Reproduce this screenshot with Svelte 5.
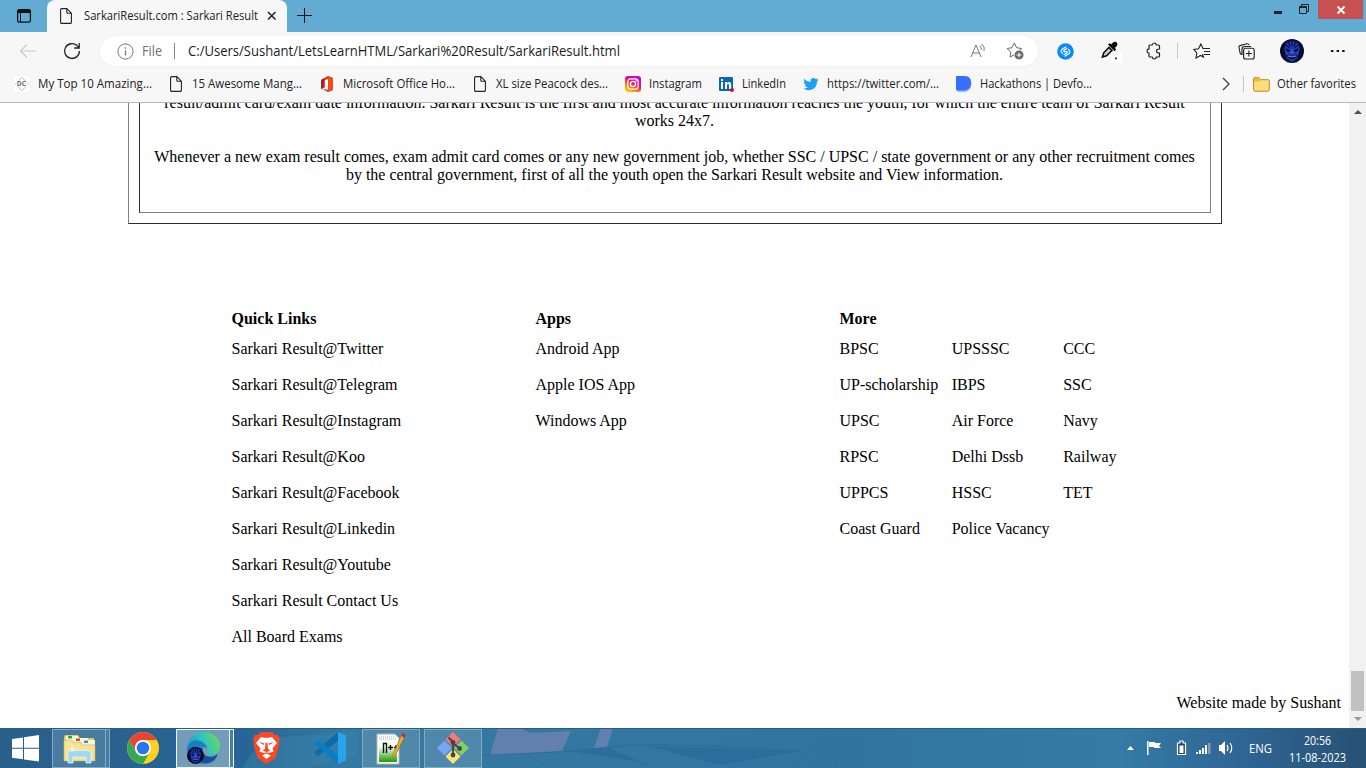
<script>
  const bookmarks = [
    { icon: 'dc', label: 'My Top 10 Amazing...', w: 154, t: 114 },
    { icon: 'page', label: '15 Awesome Mang...', w: 151, t: 110 },
    { icon: 'office', label: 'Microsoft Office Ho...', w: 153, t: 112 },
    { icon: 'page', label: 'XL size Peacock des...', w: 153, t: 112 },
    { icon: 'insta', label: 'Instagram', w: 93, t: 53 },
    { icon: 'linkedin', label: 'LinkedIn', w: 85, t: 44 },
    { icon: 'twitter', label: 'https://twitter.com/...', w: 153, t: 112 },
    { icon: 'devfolio', label: 'Hackathons | Devfo...', w: 153, t: 112 }
  ];
  const quick = ['Sarkari Result@Twitter', 'Sarkari Result@Telegram', 'Sarkari Result@Instagram', 'Sarkari Result@Koo', 'Sarkari Result@Facebook', 'Sarkari Result@Linkedin', 'Sarkari Result@Youtube', 'Sarkari Result Contact Us', 'All Board Exams'];
  const apps = ['Android App', 'Apple IOS App', 'Windows App'];
  const more = ['BPSC', 'UPSSSC', 'CCC', 'UP-scholarship', 'IBPS', 'SSC', 'UPSC', 'Air Force', 'Navy', 'RPSC', 'Delhi Dssb', 'Railway', 'UPPCS', 'HSSC', 'TET', 'Coast Guard', 'Police Vacancy'];
</script>

{#snippet label(text, width, size, color)}
  <svg class="label" {width} height="20"><text x="0" y="14" font-size={size} fill={color} textLength={width} lengthAdjust="spacingAndGlyphs">{text}</text></svg>
{/snippet}

{#snippet page()}
  <svg width="16" height="16" viewBox="0 0 16 16" fill="none" stroke="#222" stroke-width="1.1"><path d="M3.6.6h5.2l4.6 4.6v9.2q0 1-1 1H3.6q-1 0-1-1V1.6q0-1 1-1zM8.8.6v3.6q0 1 1 1h3.6" /></svg>
{/snippet}

{#snippet avatar(size)}
  <svg width={size} height={size} viewBox="0 0 24 24">
    <circle cx="12" cy="12" r="12" fill="#080b2b" />
    <path d="M6 4q6-4 12 0l2 6-3 10-5 3-5-3-3-10z" fill="#1b35a6" />
    <path d="M8 1l2 7M16 1l-2 7M12 1v6M5 5l4 4M19 5l-4 4" stroke="#080b37" stroke-width="1" />
    <path d="M5 9.5l6 2-3 1.2zM19 9.5l-6 2 3 1.2z" fill="#03051c" />
    <path d="M12 10l-2 4h4zM6 14l2 1M18 14l-2 1" stroke="#3c63dc" stroke-width=".8" fill="#2f51c8" />
    <path d="M7 16q5 2 10 0-1 4-5 4t-5-4z" fill="#060720" />
    <path d="M8 17q4 2 8 0" stroke="#8aa2f0" stroke-width=".9" fill="none" />
  </svg>
{/snippet}

<div class="screen">
  <header class="tabs">
    <div class="tabmenu">
      <svg width="16" height="16" viewBox="0 0 16 16"><rect x="1.6" y="1.6" width="12.8" height="12.6" rx="1.8" fill="none" stroke="#111" stroke-width="1.3" /><path d="M2 2h12v2.5H2z" fill="#111" stroke="#111" /><path d="M4.5 5v9" stroke="#111" /></svg>
    </div>
    <div class="tab">
      {@render page()}
      <div class="title">{@render label('SarkariResult.com : Sarkari Result', 174, 12.3, '#222')}</div>
      <svg class="close" width="10" height="10" viewBox="0 0 10 10"><path d="M1 1l7.5 7.5M8.5 1L1 8.5" stroke="#222" stroke-width="1.5" /></svg>
    </div>
    <svg class="plus" width="15" height="15" viewBox="0 0 15 15"><path d="M7.5 0v15M0 7.5h15" stroke="#111" stroke-width="1" /></svg>
    <div class="winctl">
      <svg width="10" height="16"><path d="M1 12.5h8" stroke="#222" stroke-width="3" /></svg>
      <svg width="12" height="16"><path d="M1.5 6.5h7v7h-7zM1 7.5h8M3.5 6V4.5h7v7H9" fill="none" stroke="#222" /></svg>
      <div class="x"><svg width="10" height="10"><path d="M1.5 1.5l7 7M8.5 1.5l-7 7" stroke="white" stroke-width="1.8" /></svg></div>
    </div>
  </header>

  <div class="toolbar">
    <div class="nav"><svg width="18" height="16" viewBox="0 0 18 16" fill="none" stroke="#c9c9c9" stroke-width="1.1"><path d="M17 8H1.5M8 1.5L1.5 8 8 14.5" /></svg></div>
    <div class="nav"><svg width="18" height="18" viewBox="0 0 18 18" fill="none" stroke="#222" stroke-width="1.3"><path d="M16.4 9A7.4 7.4 0 1 1 14 3.6L16 5.6M16.2 1v5h-5" /></svg></div>
    <div class="address">
      <svg width="17" height="17" viewBox="0 0 17 17" fill="none" stroke="#767676"><circle cx="8.5" cy="8.5" r="7.6" /><path d="M8.5 7.4v5M8.5 4.2v1.5" stroke-width="1.3" /></svg>
      <div class="file">{@render label('File', 20, 13.8, '#717171')}</div>
      <i></i>
      <div class="url">{@render label('C:/Users/Sushant/LetsLearnHTML/Sarkari%20Result/SarkariResult.html', 432, 14, '#1c1c1c')}</div>
      <svg class="read" width="17" height="16" viewBox="0 0 17 16" fill="none" stroke="#777"><path d="M1 14L6 2l5 12M2.7 10h6.6M10 3q2 2 1.2 4M11.5 1q4 3 2.5 7" /></svg>
      <svg class="fav" width="18" height="18" viewBox="0 0 18 18" fill="none" stroke="#696969"><path d="M8 13l-4 2 .8-5L1 6.5l5-.8L8.3 1l2.3 4.7 5 .8-2 2" /><circle cx="13" cy="13" r="4.5" fill="#696969" stroke="none" /><path d="M13 10.5v5M10.5 13h5" stroke="white" /></svg>
    </div>
    <div class="tools">
      <span style:width="54px"><svg width="17" height="17" viewBox="0 0 17 17"><circle cx="8.5" cy="8.5" r="8.3" fill="#0989ff" /><path d="M5.6 10.6C3.4 9 4 7 5.6 6L8.8 4M11.4 6.4c2.2 1.6 1.600 3.600 0 4.600L8.200 13M9.800 5.600L7.200 7.200q-1 .8 0 1.400l2.600 0q1 .6 0 1.400l-2.600 1.600" stroke="white" stroke-width="1.2" fill="none" stroke-linecap="round" /></svg></span>
      <span style:width="38px"><svg width="22" height="23" viewBox="0 0 22 23"><path d="M2.5 17l1.2-4.2L9 7.5l3 3-5.5 5.3z" fill="#ccc" stroke="#111" stroke-width="1.6" /><path d="M8 4.5l1.5-1.3 2 1L13 2.5Q15.2.8 16.7 2.5t0 3.8l-1.7 1.5 1 2-1.4 1.5z" fill="#111" /><path d="M11 12h11v11H11z" fill="white" /><path d="M15 17.5h1.8v1.8H15z" fill="#222" /></svg></span>
      <span style:width="47px"><svg width="16" height="18" viewBox="0 0 16 18" fill="none" stroke="#222" stroke-width="1.2"><path d="M4 3h2.2Q6.5 1 8.2 1t2.2 2h2.1q1 0 1 1v3q-3-.1-3 2t3 2v3q0 1-1 1h-2.1q-.5 2-2.2 2t-2-2H4q-1 0-1-1v-2.8Q1 11 1 9t2-2.2V4q0-1 1-1z" /></svg></span>
      <i class="sep"></i>
      <span style:width="48px"><svg width="18" height="17" viewBox="0 0 18 17" fill="none" stroke="#222" stroke-width="1.1"><path d="M9.5 11l1 3-3-1.6L3 15l.8-5L1 6.5l4.5-.8L7.8 1 10 5.5h7M11 8.5h6M11 11.5h6" /></svg></span>
      <span style:width="40px"><svg width="17" height="17" viewBox="0 0 17 17" fill="none" stroke="#222" stroke-width="1.15"><rect x="5.6" y="5.2" width="10.6" height="10.8" rx="2" /><path d="M10.9 7.5v6M7.9 10.5h6M3.5 11.5l-1.3-1L1 4.5Q.7 3 2 2.6L9 .8q1.5-.2 2 1.2M4 12V6q0-2.5 3-2.5h6" /></svg></span>
      <span style:width="52px">{@render avatar(24)}</span>
      <span style:width="40px"><svg width="16" height="4"><path d="M1 1h2.4v2H1zM6.6 1H9v2H6.6zM12.2 1h2.4v2h-2.4z" fill="#111" /></svg></span>
    </div>
  </div>

  <div class="bookmarks">
    {#each bookmarks as b}
      <div class="bm" style:width="{b.w}px">
        {#if b.icon === 'page'}
          {@render page()}
        {:else}
          <svg width="16" height="16" viewBox="0 0 16 16">
            {#if b.icon === 'dc'}
              <path d="M0 0h16v16H0z" fill="white" /><path d="M8 1.5L14.5 8 8 14.5 1.5 8z" fill="none" stroke="#bbb" /><path d="M2 5.5h12v5H2z" fill="#f3f3f3" /><text x="2.8" y="10.2" font-size="6.6" font-weight="bold" fill="#777">DC</text>
            {:else if b.icon === 'office'}
              <path d="M2 4l7-4 5 2v12l-5 2-6-3 6 .7V3L5.5 4.2v7L2 13z" fill="#dc3518" /><path d="M9 0l5 2v12l-5 2z" fill="#f14b18" /><path d="M2 4l3.5-2v9.2L2 13z" fill="#a91e2e" />
            {:else if b.icon === 'insta'}
              <defs><linearGradient id="ig" x1=".2" y1="1" x2=".8" y2="0"><stop stop-color="#ffd000" /><stop offset=".3" stop-color="#ff7b10" /><stop offset=".58" stop-color="#f7057d" /><stop offset="1" stop-color="#a014ed" /></linearGradient></defs><rect width="16" height="16" rx="3" fill="url(#ig)" /><rect x="2.8" y="2.8" width="10.4" height="10.4" rx="3" fill="none" stroke="white" stroke-width="1.2" /><circle cx="8" cy="8" r="2.6" fill="none" stroke="white" stroke-width="1.3" /><circle cx="11.2" cy="4.8" r=".7" fill="white" />
            {:else if b.icon === 'linkedin'}
              <rect x="1" y="1" width="14" height="14" rx="1" fill="#0a66c2" /><path d="M3 6h2v7H3zM3 3h2v2H3zM7 6h2v1q2-2 4 0l.3 6H11V9q-1-2-2 0v4H7z" fill="white" /><circle cx="14" cy="14" r="2" fill="#d11124" />
            {:else if b.icon === 'twitter'}
              <path d="M1 2.7q3 3.4 6.5 3.3Q7 2 10.5 2q1.4 0 2.3 1l2.2-.8-1.3 1.8 2-.5-1.6 1.8Q14 12 8.5 13.8 4 15 .4 12.6q2.7.1 4.3-1.4-2.3-.2-3-2.2l1.4-.1Q.8 8 .8 5.7l1.3.4Q0 4.5 1 2.7z" fill="#1da1f2" />
            {:else}
              <path d="M1 0h8q6.5 0 6.5 7.5T9 16H3q-2 0-2-2z" fill="#9abaff" /><path d="M0 0h8.5Q15 0 15 7t-6.5 7.5H1.5Q0 14.5 0 13z" fill="#3770ff" />
            {/if}
          </svg>
        {/if}
        {@render label(b.label, b.t, 12.3, '#222')}
      </div>
    {/each}
    <svg class="chev" width="9" height="14" viewBox="0 0 9 14"><path d="M1 1l6 6-6 6" fill="none" stroke="#444" stroke-width="1.4" /></svg>
    <i class="sep"></i>
    <svg class="folder" width="17" height="15" viewBox="0 0 17 15"><path d="M.6 2Q.6.7 2 .7h4l2 2h7q1.3 0 1.3 1.3v8.7q0 1.5-1.5 1.5H2Q.6 14.2.6 12.7z" fill="#ffdc7d" stroke="#b98a16" /><path d="M1 4.5h5l2-1.8L6 1H2L1 2z" fill="#edb931" /></svg>
    {@render label('Other favorites', 79, 12.3, '#222')}
  </div>

  <main>
    <div class="content">
      <div class="outer">
        <div class="inner">
          <p>result/admit card/exam date information. Sarkari Result is the first and most accurate information reaches the youth, for which the entire team of Sarkari Result<br />works 24x7.</p>
          <p>Whenever a new exam result comes, exam admit card comes or any new government job, whether SSC / UPSC / state government or any other recruitment comes<br />by the central government, first of all the youth open the Sarkari Result website and View information.</p>
        </div>
      </div>
      <footer>
        <section><h4>Quick Links</h4><div class="list">{#each quick as q}<span>{q}</span>{/each}</div></section>
        <section><h4>Apps</h4><div class="list">{#each apps as a}<span>{a}</span>{/each}</div></section>
        <section><h4>More</h4><div class="list triple">{#each more as m}<span>{m}</span>{/each}</div></section>
      </footer>
      <div class="credit">Website made by Sushant</div>
    </div>
    <div class="scroll">
      <svg width="17" height="17"><path d="M5 11l4-4 4 4z" fill="#505050" /></svg>
      <div class="thumb"></div>
      <svg width="17" height="17"><path d="M5 6l4 4 4-4z" fill="#999" /></svg>
    </div>
  </main>

  <div class="taskbar">
    <svg class="wall" width="1366" height="40" viewBox="0 0 1366 40">
      <defs><linearGradient id="tb"><stop stop-color="#2a5f8b" /><stop offset=".18" stop-color="#276596" /><stop offset=".25" stop-color="#3579a3" /><stop offset=".4" stop-color="#3478a2" /><stop offset=".62" stop-color="#3174a0" /><stop offset=".82" stop-color="#347ba6" /><stop offset=".9" stop-color="#306797" /><stop offset="1" stop-color="#275174" /></linearGradient></defs>
      <path d="M0 0h1366v40H0z" fill="url(#tb)" />
      <path d="M242 40l20-29 95-8v24l-48 13z" fill="#3987ad" opacity=".4" />
      <path d="M498 0h21l12 5 40-2-9 20-72 4zM601 0h12l-6 19-13 1z" fill="#6280ae" />
      <path d="M480 27q90-2 128-8t192 4" fill="none" stroke="#286790" opacity=".6" /><path d="M570 23l38-3 32 14zM647 18l151 5-76 14z" fill="#276b9c" opacity=".7" />
      <path d="M528 27l20 13M608 20l45 20M792 40q26-28 44-40M835 40l5-13" fill="none" stroke="#286c97" opacity=".6" />
      <path d="M0 .5h1366" stroke="#285c80" />
    </svg>
    <div class="apps">
      <div class="slot start"><svg width="27" height="27" viewBox="0 0 27 27" fill="white"><path d="M0 4l11-1.6v10.4H0zM12 2.2L27 0v12.8H12zM0 13.8h11v10.4L0 22.7zM12 13.8h15v12.7L12 24.4z" /></svg></div>
      <div class="box group"><svg width="33" height="32" viewBox="0 0 33 32"><path d="M1 28V5q0-2 2-2h12l2 3h14v22z" fill="#e5c66e" /><path d="M3 4h12v6H3z" fill="#fffbe6" /><path d="M5 4h4v2.500H5z" fill="#19b52b" /><path d="M10 6h15v5H10z" fill="#fff6d2" /><path d="M13 6.500h4V9h-4z" fill="#dc4a2a" /><path d="M18 8h14v5H18z" fill="#fff6d2" /><path d="M21 8.500h4V11h-4z" fill="#2498e0" /><path d="M1 8h8l1.500 2.500H18l2 2.500h12v16H1z" fill="#f8e194" stroke="#cdae60" stroke-width=".6" /><path d="M5 31V21q0-2.500 3-2.500h17q3 0 3 2.500v10h-5v-6H10v6z" fill="#9ed8ee" stroke="#e1f7ff" stroke-width=".8" /><path d="M9 13v7M5.500 16.500h7" stroke="#fff" stroke-width=".8" /></svg></div>
      <div class="stack"></div>
      <div class="slot chrome"><svg width="32" height="32" viewBox="0 0 32 32"><circle cx="16" cy="16" r="16" fill="#ffcf23" /><path d="M2.2 8A16 16 0 0 1 29.8 8H16a8 8 0 0 0-7 12z" fill="#e84435" /><path d="M2.2 8A16 16 0 0 0 16 32l7-12a8 8 0 0 1-14 0z" fill="#35a853" /><circle cx="16" cy="16" r="8" fill="white" /><circle cx="16" cy="16" r="6.3" fill="#2976ed" /></svg></div>
      <div class="box group active"><div class="edge"><svg width="33" height="32" viewBox="0 0 33 32">
        <defs><linearGradient id="eg" x1="0" y1=".6" x2="1" y2=".3"><stop stop-color="#149bd7" /><stop offset=".5" stop-color="#2fc3c6" /><stop offset="1" stop-color="#6bdc50" /></linearGradient></defs>
        <path d="M0 16C2 5 9 0 17 0c9 0 16 7 16 14 0 6-4 9-8 9-5 0-6-2-5-4 2-3 0-8-6-10C8 8 3 11 0 16z" fill="url(#eg)" />
        <path d="M0 16C3 9 8 7 13 9c5 2 7 5 7 8-2-3-8-2-8 4 0 7 7 10 14 7 2-1 3-1 2 0-4 4-11 5-17 3C4 29 0 23 0 16z" fill="#1682bd" />
        <path d="M13 16c-4 4-3 10 2 14 5 3 13-1 15-6 1-2 0-2-1-1-4 3-10 2-12-1-2-2-2-4-1-6z" fill="#174f98" />
      </svg><div class="mini">{@render avatar(17)}</div></div></div>
      <div class="stack lit"></div>
      <div class="slot brave"><svg width="27" height="32" viewBox="0 0 27 32"><path d="M8 0h11l3 3h3l2 4-1 3 .5 2-4 14-9 6-9-6L.5 12 1 10 0 7l2-4h3z" fill="#fb4722" /><path d="M8 5l3.500.7h4L19 5l5 6-4.500 5.500 1 3-5 1.800-2-1.300-2 1.300-5-1.800 1-3L3 11zM9 23.500l4.500-2 4.500 2-4.500 3.500z" fill="white" /><path d="M6 10l5.500 1.500-1 1.500zM21 10l-5.500 1.500 1 1.500zM12.500 11h2l.5 6 2.500 1.200-4 2-4-2L12 17z" fill="#fb4722" /></svg></div>
      <div class="slot vs"><svg width="32" height="32" viewBox="0 0 32 32"><path d="M24 0v9L4 24l-4-3.500z" fill="#0a6eae" /><path d="M0 11.500L4 8l20 15v9z" fill="#087fc2" /><path d="M24 0l8 3.500v25L24 32z" fill="#26a5ed" /></svg></div>
      <div class="box npp"><svg width="30" height="33" viewBox="0 0 30 33"><defs><linearGradient id="np" x1="0" y1="0" x2="0" y2="1"><stop offset=".3" stop-color="#f7fff0" /><stop offset="1" stop-color="#1b9b05" /></linearGradient></defs><path d="M1 2h18l4 4v26H1z" fill="#fff" stroke="#b8b8a8" /><path d="M3 8h18v22H3z" fill="url(#np)" /><path d="M2 2h17M3 5h16M3 7h18" stroke="#9ab3bb" stroke-dasharray="1 1" /><path d="M7.500 21v-9.500h3V21M12 15.500h5M14.500 13v5M18 15.500h4M20 13v5" fill="none" stroke="#111" stroke-width="1.4" /><path d="M26 2l3 2-10 20-3 3 1-5z" fill="#e9ae27" stroke="#99712a" stroke-width=".7" /><path d="M26.500 1l3 2-1 3-3-2z" fill="#a62f4d" /></svg></div>
      <div class="box git"><svg width="32" height="32" viewBox="0 0 32 32"><path d="M16 0l7.500 7.500L16 15 8.500 7.500z" fill="#f97978" /><path d="M24.500 8.500L32 16l-7.500 7.500L17 16z" fill="#84cf5d" /><path d="M16 17l7.500 7.500L16 32l-7.500-7.500z" fill="#ffe277" /><path d="M7.500 8.500L15 16l-7.500 7.500L0 16z" fill="#75a7f4" /><path d="M11.500 5.500L16 10v13M16 11l6 5" fill="none" stroke="#444346" stroke-width="1.900" /><circle cx="16" cy="10.500" r="2.400" fill="#444346" /><circle cx="16" cy="23" r="2.400" fill="#444346" /><circle cx="22.500" cy="16.500" r="2.400" fill="#444346" /></svg></div>
    </div>
    <div class="tray">
      <svg width="110" height="20" viewBox="0 0 110 20" fill="white"><path d="M1 12l3.500-4 3.500 4z" /><path d="M21 3h1.500v14H21zM23 4h6v1h6l-2 3 2 2h-7V9h-5z" /><path d="M54 3h3v2h2.500v11.500h-8V5H54z" fill="#254862" stroke="white" stroke-width="1.200" /><path d="M53.500 7.500h4V15h-4zM70 14h2v2h-2zM73 12h2v4h-2zM76 10h2v6h-2zM79 7h2v9h-2z" /><path d="M82 5h2.500v11H82z" fill="#879bac" /><path d="M93 7h2l4-4v14l-4-4h-2z" /><path d="M101 7q2 3 0 6M104 5q3.500 5 0 10" fill="none" stroke="white" stroke-width="1.200" /></svg>
      <div class="lang">{@render label('ENG', 23, 12.3, 'white')}</div>
      <div class="clock">{@render label('20:56', 27, 12.3, 'white')}{@render label('11-08-2023', 57, 12.3, 'white')}</div>
    </div>
  </div>
</div>

<style>
  :global(body) { margin: 0; overflow: hidden; }
  * { box-sizing: border-box; }
  svg { display: block; flex: none; }
  .label { overflow: visible; font-family: "Open Sans", "Noto Sans", sans-serif; }
  .screen { width: 1366px; height: 768px; display: flex; flex-direction: column; background: white; font-family: "Open Sans", sans-serif; }
  .tabs { height: 32px; flex: none; display: flex; background: #62acd4; }
  .tabmenu { width: 47px; padding: 8px 0 0 16px; }
  .tab { width: 240px; display: flex; align-items: center; background: #f7f7f7; border-radius: 8px 8px 0 0; padding-left: 11px; }
  .title { margin-left: 10px; }
  .close { margin-left: 9px; }
  .plus { margin: 8px 0 0 10px; }
  .winctl { margin-left: auto; display: flex; height: 19px; padding-right: 3px; }
  .winctl > svg:first-child { margin-right: 16px; }
  .winctl > svg:nth-child(2) { margin-right: 8px; margin-left: -1px; }
  .x { width: 45px; height: 19px; background: #c75050; display: flex; align-items: center; justify-content: center; }
  .toolbar { height: 38px; flex: none; background: #f7f7f7; display: flex; align-items: center; }
  .nav { width: 44px; display: flex; justify-content: center; }
  .nav:first-child { margin-left: 6px; }
  .address { width: 938px; height: 30px; border-radius: 15px; margin-left: 6px; padding-left: 17px; display: flex; align-items: center; background: white; box-shadow: 0 0 2px #e6e6e6; }
  .file { margin-left: 8px; padding-top: 1px; }
  .url { padding-top: 1px; }
  .address i { width: 1px; height: 16px; background: #888; margin: 0 13px 0 12px; }
  .read { margin-left: 350px; }
  .fav { margin-left: 19px; }
  .tools { display: flex; align-items: center; }
  .tools span { display: flex; justify-content: center; flex: none; }
  .sep { width: 1px; height: 16px; background: #c6c6c6; flex: none; }
  .bookmarks { height: 33px; flex: none; display: flex; align-items: center; background: #f7f7f7; border-bottom: 1px solid #b8b8b8; padding: 0 0 4px 14px; }
  .bm { display: flex; gap: 8px; align-items: center; flex: none; }
  .chev { margin-left: 113px; }
  .bookmarks .sep { margin: 0 9px 0 12px; }
  .folder { margin-right: 7px; }
  main { height: 625px; flex: none; display: flex; overflow: hidden; font: 16px/18px "Liberation Serif", serif; color: #000; }
  .content { width: 1349px; }
  .outer { width: 1094px; height: 132px; margin: -11px 0 0 128px; padding: 0 10px 10px; border: 1px solid #808080; border-right-color: #2c2c2c; border-bottom-color: #2c2c2c; }
  .inner { height: 120px; padding-right: 1px; border: 1px solid #2c2c2c; border-right-color: #808080; border-bottom-color: #808080; text-align: center; white-space: nowrap; }
  p { margin: 0 0 18px; }
  footer { display: flex; padding-left: 231.5px; margin-top: 86px; height: 384px; }
  section { width: 304px; }
  h4 { margin: 0; height: 30px; font-size: 16px; line-height: 18px; }
  .list { display: grid; grid-auto-rows: 36px; }
  .triple { grid-template-columns: 112.2px 111.5px 111.5px; white-space: nowrap; }
  .credit { text-align: right; padding-right: 8px; }
  .scroll { width: 17px; background: #f1f1f1; display: flex; flex-direction: column; }
  .thumb { width: 13px; height: 40px; margin: auto 2px 0; background: #c1c1c1; }
  .taskbar { height: 40px; flex: none; position: relative; display: flex; justify-content: space-between; }
  .wall { position: absolute; inset: 0; }
  .apps, .tray { position: relative; display: flex; align-items: center; }
  .apps { height: 40px; }
  .slot { display: flex; justify-content: center; }
  .start { width: 40px; padding-right: 6px; margin: 0 0 0 8px; }
  .box { width: 58px; height: 39px; border: 1px solid #83aac3; background: #6e9ab477; display: flex; align-items: center; justify-content: center; }
  .group { width: 54px; }
  .stack { width: 4px; height: 39px; border: 1px solid #83aac3; border-left: 0; background: #6e9ab477; }
  .start + .group { margin-left: 4px; }
  .chrome { width: 66px; padding-right: 1px; }
  .active { width: 54px; background: #9bb8cbaa; border-color: #f1f7fb; }
  .lit { width: 4px; border-color: #f1f7fb; }
  .edge { position: relative; }
  .mini { position: absolute; left: 0; bottom: 0; }
  .brave { width: 65px; }
  .vs { width: 61px; }
  .npp { margin-left: 2px; }
  .git { margin-left: 4px; }
  .tray { padding-right: 20px; }
  .tray > svg:first-child { margin-right: 13px; }
  .lang { padding-top: 1px; }
  .clock { margin-left: 17px; display: flex; flex-direction: column; align-items: center; }
  .clock .label { height: 17px; }
</style>
